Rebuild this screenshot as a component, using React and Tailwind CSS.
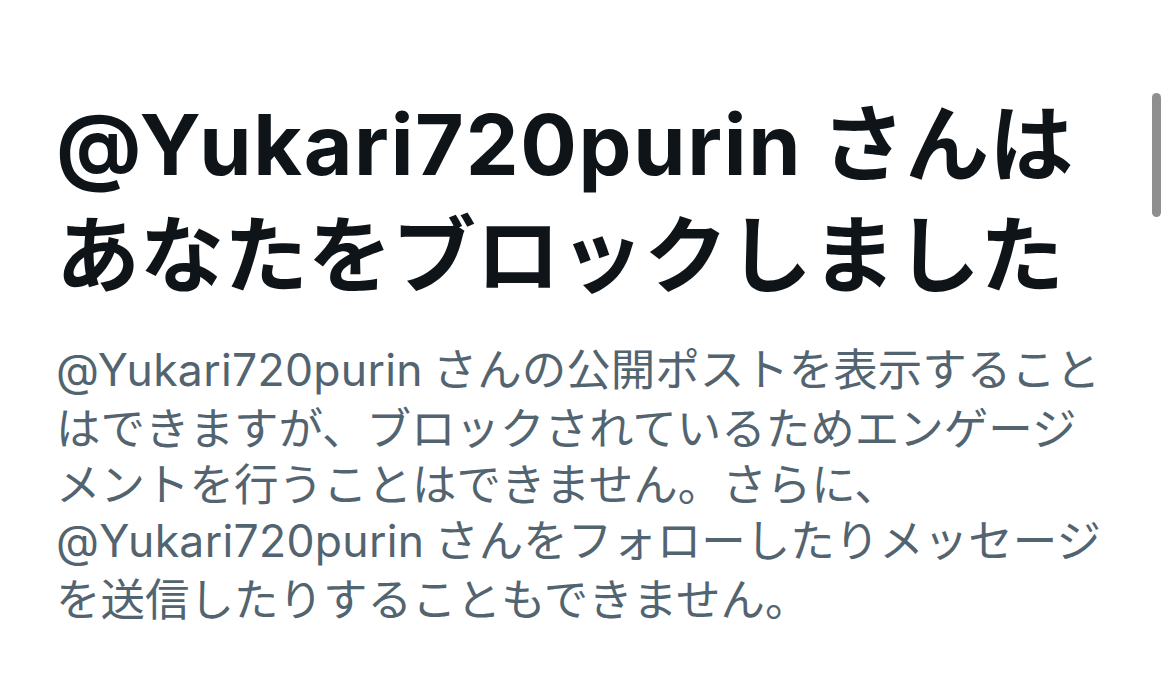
import React from 'react';

const handle = '@Yukari720purin';

function App() {
  return (
    <div className="relative w-[1170px] h-[699px] bg-white overflow-hidden">
      {/* scrollbar thumb */}
      <div className="absolute left-[1152px] top-[93px] w-[9px] h-[124px] rounded-full bg-[#8f8f8f]" />

      <div className="pl-[56px] pt-[86px] font-['Noto_Sans_CJK_JP',sans-serif]">
        <h1 className="text-[84px] leading-[105px] font-bold text-[#0f1419] whitespace-nowrap">
          <span className="font-['Inter','Noto_Sans_CJK_JP',sans-serif] tracking-[1.7px]">{handle}</span> さんは
          <br />
          あなたをブロックしました
        </h1>
        <p className="mt-[37px] text-[44.5px] leading-[56px] text-[#536471] whitespace-nowrap">
          <span className="font-['Inter','Noto_Sans_CJK_JP',sans-serif] tracking-[0.3px]">{handle}</span> さんの公開ポストを表示すること
          <br />
          はできますが、ブロックされているためエンゲージ
          <br />
          メントを行うことはできません。さらに、
          <br />
          <span className="font-['Inter','Noto_Sans_CJK_JP',sans-serif] tracking-[0.3px]">{handle}</span> さんをフォローしたりメッセージ
          <br />
          を送信したりすることもできません。
        </p>
      </div>
    </div>
  );
}

export default App;
